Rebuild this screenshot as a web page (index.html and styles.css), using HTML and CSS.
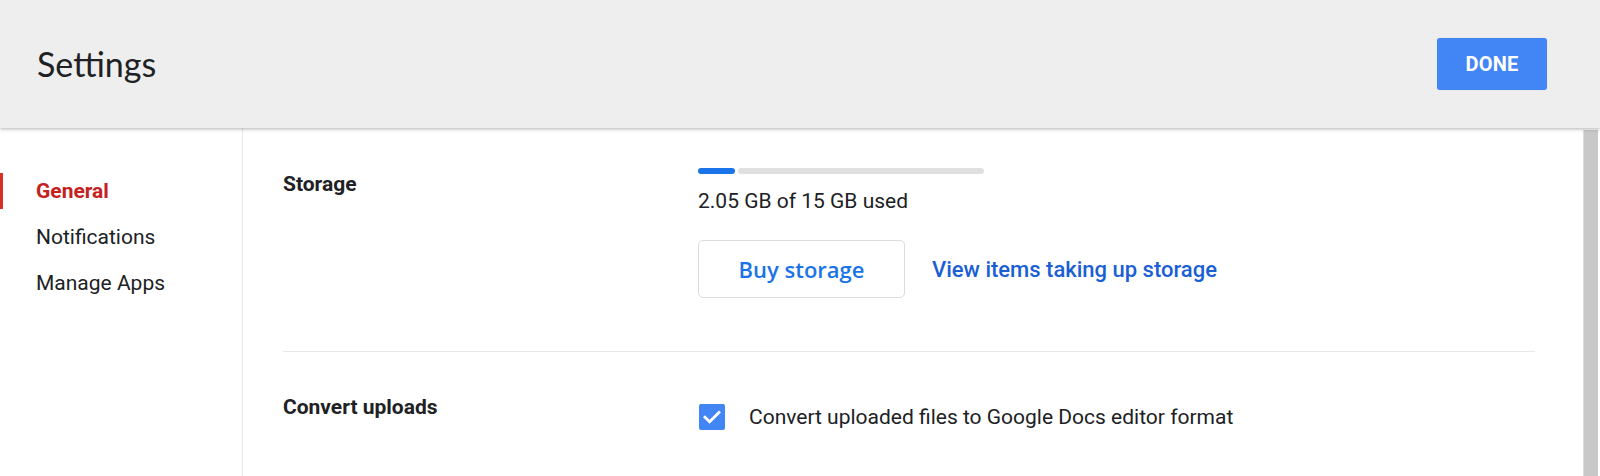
FILE: index.html
```html
<!DOCTYPE html>
<html lang="en">
<head>
<meta charset="utf-8">
<title>Settings</title>
<link rel="stylesheet" href="styles.css">
</head>
<body>
<header class="topbar">
  <h1 class="title">Settings</h1>
  <button class="done">DONE</button>
</header>
<div class="layout">
  <nav class="sidebar">
    <a class="nav-item active">General</a>
    <a class="nav-item">Notifications</a>
    <a class="nav-item">Manage Apps</a>
  </nav>
  <main class="content">
    <section class="row row-storage">
      <div class="label">Storage</div>
      <div class="value">
        <div class="meter">
          <div class="meter-used" style="width:37px"></div>
          <div class="meter-rest"></div>
        </div>
        <div class="usage">2.05 GB of 15 GB used</div>
        <div class="actions">
          <button class="btn-outline">Buy storage</button>
          <a class="link">View items taking up storage</a>
        </div>
      </div>
    </section>
    <section class="row row-convert">
      <div class="label">Convert uploads</div>
      <div class="value">
        <label class="check-row">
          <span class="checkbox">
            <svg viewBox="0 0 26 26" width="26" height="26"><path d="M6 13.2 L10.6 17.8 L20 8.4" fill="none" stroke="#fff" stroke-width="2.8" stroke-linecap="square"/></svg>
          </span>
          <span class="check-text">Convert uploaded files to Google Docs editor format</span>
        </label>
      </div>
    </section>
  </main>
  <div class="scrollbar"></div>
</div>
</body>
</html>
```
FILE: styles.css
```css
html, body {
  margin: 0;
  padding: 0;
  height: 476px;
  overflow: hidden;
  background: #ffffff;
}
body {
  font-family: Roboto, "Liberation Sans", Arial, sans-serif;
  color: #202124;
}
.topbar {
  position: relative;
  z-index: 2;
  height: 128px;
  box-sizing: border-box;
  background: #eeeeee;
  display: flex;
  align-items: center;
  justify-content: space-between;
  padding: 0 53px 0 37px;
  box-shadow: 0 1px 3px rgba(0,0,0,0.22), 0 2px 5px rgba(0,0,0,0.08);
}
.title {
  margin: 0;
  font-family: Lato, "Open Sans", sans-serif;
  font-weight: 400;
  font-size: 34px;
  color: #202124;
  line-height: 40px;
}
.done {
  width: 110px;
  height: 52px;
  border: none;
  border-radius: 3px;
  background: #4285f4;
  color: #ffffff;
  font-family: Roboto, sans-serif;
  font-weight: 700;
  font-size: 20px;
  letter-spacing: 0.2px;
  padding: 0;
  box-shadow: 0 0 1px rgba(0,0,0,0.2);
}
.layout {
  display: flex;
  height: 348px;
}
.sidebar {
  width: 242px;
  border-right: 1px solid #e8e8e8;
  padding-top: 45px;
  display: flex;
  flex-direction: column;
  gap: 10px;
  flex-shrink: 0;
}
.nav-item {
  display: block;
  height: 36px;
  line-height: 36px;
  font-size: 21px;
  color: #202124;
  border-left: 3px solid transparent;
  padding-left: 33px;
}
.nav-item.active {
  color: #c5221f;
  font-weight: 700;
  border-left-color: #d93025;
}
.content {
  flex: 1;
  padding: 0 48px 0 40px;
}
.row {
  display: grid;
  grid-template-columns: 415px 1fr;
}
.label {
  font-size: 21px;
  font-weight: 700;
  line-height: 24px;
  color: #202124;
}
.row-storage {
  padding: 40px 0 53px;
  border-bottom: 1px solid #e8e8e8;
}
.row-storage .label {
  margin-top: 4px;
}
.meter {
  width: 286px;
  height: 6px;
  display: flex;
  gap: 3px;
}
.meter-used {
  height: 6px;
  border-radius: 3px;
  background: #1a73e8;
}
.meter-rest {
  flex: 1;
  height: 6px;
  border-radius: 3px;
  background: #e0e0e0;
}
.usage {
  margin-top: 15px;
  font-size: 21px;
  line-height: 24px;
  color: #202124;
}
.actions {
  margin-top: 27px;
  display: flex;
  align-items: center;
  gap: 27px;
}
.btn-outline {
  width: 207px;
  height: 58px;
  border: 1px solid #dadce0;
  border-radius: 5px;
  background: #ffffff;
  color: #1a73e8;
  font-family: "Open Sans", Roboto, sans-serif;
  font-size: 22px;
  font-weight: 600;
  padding: 0;
}
.link {
  color: #1a5fd4;
  font-size: 22px;
  font-weight: 500;
}
.row-convert {
  padding-top: 43px;
}
.check-row {
  display: flex;
  align-items: center;
  gap: 24px;
  margin-top: 9px;
  margin-left: 1px;
}
.checkbox {
  width: 26px;
  height: 26px;
  border-radius: 2px;
  background: #4285f4;
  display: flex;
}
.check-text {
  font-size: 21px;
  line-height: 24px;
  color: #202124;
}
.scrollbar {
  width: 14px;
  margin-right: 2px;
  margin-top: 2px;
  background: #c8c8c8;
  border-left: 1px solid #dcdcdc;
  flex-shrink: 0;
}
```
